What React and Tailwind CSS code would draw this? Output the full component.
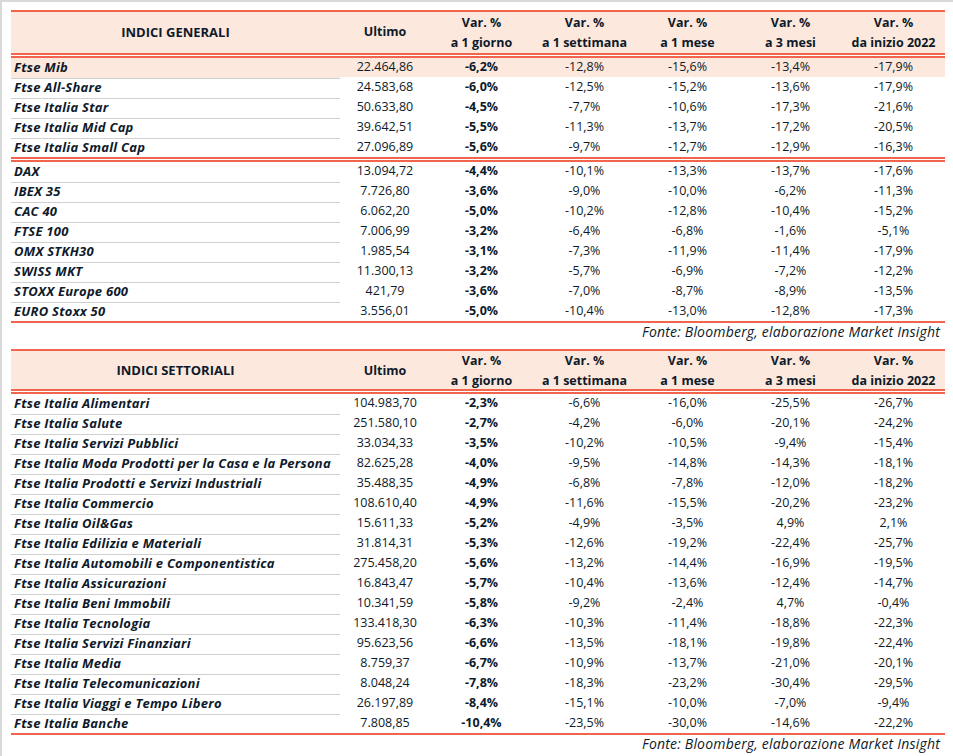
import React from "react";

const t1a = [
  ["Ftse Mib", "22.464,86", "-6,2%", "-12,8%", "-15,6%", "-13,4%", "-17,9%"],
  ["Ftse All-Share", "24.583,68", "-6,0%", "-12,5%", "-15,2%", "-13,6%", "-17,9%"],
  ["Ftse Italia Star", "50.633,80", "-4,5%", "-7,7%", "-10,6%", "-17,3%", "-21,6%"],
  ["Ftse Italia Mid Cap", "39.642,51", "-5,5%", "-11,3%", "-13,7%", "-17,2%", "-20,5%"],
  ["Ftse Italia Small Cap", "27.096,89", "-5,6%", "-9,7%", "-12,7%", "-12,9%", "-16,3%"],
];
const t1b = [
  ["DAX", "13.094,72", "-4,4%", "-10,1%", "-13,3%", "-13,7%", "-17,6%"],
  ["IBEX 35", "7.726,80", "-3,6%", "-9,0%", "-10,0%", "-6,2%", "-11,3%"],
  ["CAC 40", "6.062,20", "-5,0%", "-10,2%", "-12,8%", "-10,4%", "-15,2%"],
  ["FTSE 100", "7.006,99", "-3,2%", "-6,4%", "-6,8%", "-1,6%", "-5,1%"],
  ["OMX STKH30", "1.985,54", "-3,1%", "-7,3%", "-11,9%", "-11,4%", "-17,9%"],
  ["SWISS MKT", "11.300,13", "-3,2%", "-5,7%", "-6,9%", "-7,2%", "-12,2%"],
  ["STOXX Europe 600", "421,79", "-3,6%", "-7,0%", "-8,7%", "-8,9%", "-13,5%"],
  ["EURO Stoxx 50", "3.556,01", "-5,0%", "-10,4%", "-13,0%", "-12,8%", "-17,3%"],
];
const t2 = [
  ["Ftse Italia Alimentari", "104.983,70", "-2,3%", "-6,6%", "-16,0%", "-25,5%", "-26,7%"],
  ["Ftse Italia Salute", "251.580,10", "-2,7%", "-4,2%", "-6,0%", "-20,1%", "-24,2%"],
  ["Ftse Italia Servizi Pubblici", "33.034,33", "-3,5%", "-10,2%", "-10,5%", "-9,4%", "-15,4%"],
  ["Ftse Italia Moda Prodotti per la Casa e la Persona", "82.625,28", "-4,0%", "-9,5%", "-14,8%", "-14,3%", "-18,1%"],
  ["Ftse Italia Prodotti e Servizi Industriali", "35.488,35", "-4,9%", "-6,8%", "-7,8%", "-12,0%", "-18,2%"],
  ["Ftse Italia Commercio", "108.610,40", "-4,9%", "-11,6%", "-15,5%", "-20,2%", "-23,2%"],
  ["Ftse Italia Oil&Gas", "15.611,33", "-5,2%", "-4,9%", "-3,5%", "4,9%", "2,1%"],
  ["Ftse Italia Edilizia e Materiali", "31.814,31", "-5,3%", "-12,6%", "-19,2%", "-22,4%", "-25,7%"],
  ["Ftse Italia Automobili e Componentistica", "275.458,20", "-5,6%", "-13,2%", "-14,4%", "-16,9%", "-19,5%"],
  ["Ftse Italia Assicurazioni", "16.843,47", "-5,7%", "-10,4%", "-13,6%", "-12,4%", "-14,7%"],
  ["Ftse Italia Beni Immobili", "10.341,59", "-5,8%", "-9,2%", "-2,4%", "4,7%", "-0,4%"],
  ["Ftse Italia Tecnologia", "133.418,30", "-6,3%", "-10,3%", "-11,4%", "-18,8%", "-22,3%"],
  ["Ftse Italia Servizi Finanziari", "95.623,56", "-6,6%", "-13,5%", "-18,1%", "-19,8%", "-22,4%"],
  ["Ftse Italia Media", "8.759,37", "-6,7%", "-10,9%", "-13,7%", "-21,0%", "-20,1%"],
  ["Ftse Italia Telecomunicazioni", "8.048,24", "-7,8%", "-18,3%", "-23,2%", "-30,4%", "-29,5%"],
  ["Ftse Italia Viaggi e Tempo Libero", "26.197,89", "-8,4%", "-15,1%", "-10,0%", "-7,0%", "-9,4%"],
  ["Ftse Italia Banche", "7.808,85", "-10,4%", "-23,5%", "-30,0%", "-14,6%", "-22,2%"],
];

const GRID = "grid grid-cols-[329px_90px_repeat(5,103px)]";

function DoubleLine() {
  return <div className="h-[5px] border-y-2 border-[#f1654c]" />;
}

function Header({ title, tall }) {
  const cols = [
    ["Var. %", "a 1 giorno"],
    ["Var. %", "a 1 settimana"],
    ["Var. %", "a 1 mese"],
    ["Var. %", "a 3 mesi"],
    ["Var. %", "da inizio 2022"],
  ];
  return (
    <div
      className={`${GRID} ${tall ? "h-[43px]" : "h-[40px]"} bg-[#fce8dc] border-t-2 border-[#f1654c] font-bold text-[12.5px]`}
    >
      <div className="flex items-center justify-center text-[13px]">{title}</div>
      <div className="flex items-center justify-center">Ultimo</div>
      {cols.map((c, i) => (
        <div key={i} className="flex flex-col items-center justify-center leading-[20px]">
          <span>{c[0]}</span>
          <span>{c[1]}</span>
        </div>
      ))}
    </div>
  );
}

function Row({ r, last, hl }) {
  const bg = hl ? "bg-[#fce8dc]" : "";
  return (
    <div className={`${GRID} ${last ? "h-[19px]" : "h-5"}`}>
      <div
        className={`flex items-center pl-[3px] font-bold italic text-[13px] tracking-[0.25px] whitespace-nowrap ${bg} ${
          last ? "" : "border-b border-[#d0d0d0]"
        }`}
      >
        {r[0]}
      </div>
      {r.slice(1).map((v, i) => (
        <div
          key={i}
          className={`h-[19px] flex items-center justify-center text-[12.5px] ${bg} ${
            i === 1 ? "font-bold" : ""
          }`}
        >
          {v}
        </div>
      ))}
    </div>
  );
}

function Fonte() {
  return (
    <div className="h-[26px] flex justify-end pr-[5px] italic text-[14px] tracking-[0.2px] leading-[18px]">
      Fonte: Bloomberg, elaborazione Market Insight
    </div>
  );
}

export default function App() {
  return (
    <div
      className="min-h-screen w-[953px] bg-white border-t-2 border-l-2 border-[#d9d9d9] pt-2 pl-[9px] text-[#0e1a2a]"
      style={{ fontFamily: '"Open Sans", "DejaVu Sans", sans-serif' }}
    >
      <div className="w-[934px]">
        <Header title="INDICI GENERALI" tall />
        <DoubleLine />
        {t1a.map((r, i) => (
          <Row key={i} r={r} hl={i === 0} last={i === t1a.length - 1} />
        ))}
        <DoubleLine />
        {t1b.map((r, i) => (
          <Row key={i} r={r} last={i === t1b.length - 1} />
        ))}
        <div className="h-[2px] bg-[#f1654c]" />
        <Fonte />
        <Header title="INDICI SETTORIALI" />
        <DoubleLine />
        {t2.map((r, i) => (
          <Row key={i} r={r} last={i === t2.length - 1} />
        ))}
        <div className="h-[2px] bg-[#f1654c]" />
        <Fonte />
      </div>
    </div>
  );
}
